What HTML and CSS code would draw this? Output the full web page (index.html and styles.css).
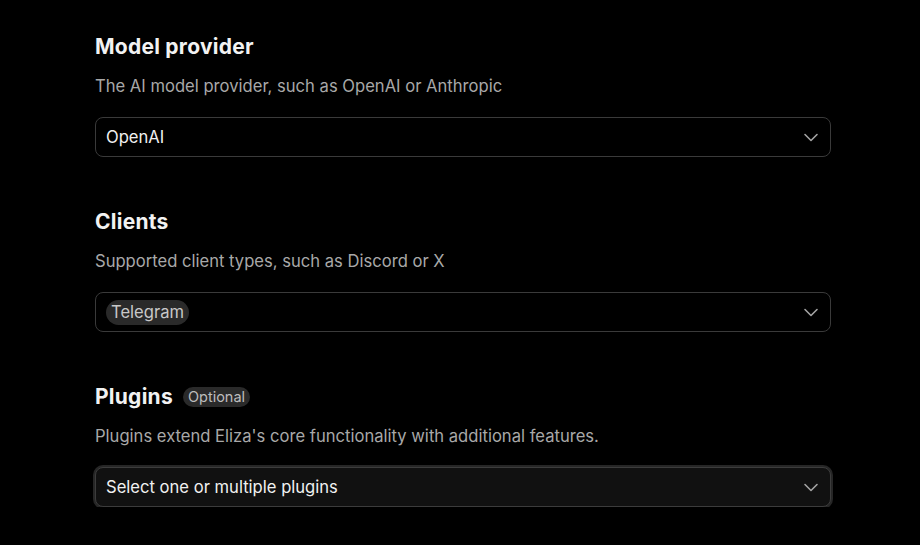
FILE: index.html
```html
<!DOCTYPE html>
<html>
<head>
<meta charset="utf-8">
<link rel="stylesheet" href="styles.css">
</head>
<body>
<main class="form">
  <section class="field">
    <h2 class="title">Model provider</h2>
    <p class="desc">The AI model provider, such as OpenAI or Anthropic</p>
    <div class="select">
      <span class="value">OpenAI</span>
      <svg class="chev" width="16" height="16" viewBox="0 0 16 16"><path d="M2 5.5l6 6 6-6" fill="none" stroke="#a3a3a3" stroke-width="1.6" stroke-linecap="round" stroke-linejoin="round"/></svg>
    </div>
  </section>
  <section class="field">
    <h2 class="title">Clients</h2>
    <p class="desc">Supported client types, such as Discord or X</p>
    <div class="select">
      <span class="chip">Telegram</span>
      <svg class="chev" width="16" height="16" viewBox="0 0 16 16"><path d="M2 5.5l6 6 6-6" fill="none" stroke="#a3a3a3" stroke-width="1.6" stroke-linecap="round" stroke-linejoin="round"/></svg>
    </div>
  </section>
  <section class="field">
    <h2 class="title">Plugins <span class="badge">Optional</span></h2>
    <p class="desc">Plugins extend Eliza's core functionality with additional features.</p>
    <div class="select focused">
      <span class="value">Select one or multiple plugins</span>
      <svg class="chev" width="16" height="16" viewBox="0 0 16 16"><path d="M2 5.5l6 6 6-6" fill="none" stroke="#a3a3a3" stroke-width="1.6" stroke-linecap="round" stroke-linejoin="round"/></svg>
    </div>
  </section>
</main>
</body>
</html>
```
FILE: styles.css
```css
html, body {
  margin: 0;
  padding: 0;
  background: #000;
}
body {
  font-family: Inter, "Noto Sans", sans-serif;
  color: #ededed;
}
.form {
  width: 736px;
  padding: 33px 0 0 95px;
  display: flex;
  flex-direction: column;
  gap: 51px;
}
.field {
  display: flex;
  flex-direction: column;
}
.title {
  margin: 0;
  font-size: 21px;
  line-height: 28px;
  font-weight: 700;
  color: #f2f2f2;
  display: flex;
  align-items: center;
  gap: 10px;
  letter-spacing: 0.25px;
}
.badge {
  font-size: 14.5px;
  font-weight: 400;
  line-height: 20px;
  padding: 0 5px;
  border-radius: 10px;
  background: #2a2a2a;
  color: #bdbdbd;
  letter-spacing: 0;
}
.desc {
  margin: 13px 0 0;
  font-size: 16.6px;
  line-height: 24px;
  color: #a8a8a8;
}
.select {
  margin-top: 19px;
  height: 40px;
  box-sizing: border-box;
  border: 1px solid #3a3a3a;
  border-radius: 8px;
  display: flex;
  align-items: center;
  justify-content: space-between;
  padding: 0 11px 0 10px;
  background: #000;
}
.select.focused {
  background: #111;
  border-color: #3c3c3c;
  box-shadow: 0 0 0 2px #262626;
}
.value {
  font-size: 16.6px;
  color: #f0f0f0;
}
.chip {
  font-size: 16.6px;
  line-height: 25px;
  color: #c8c8c8;
  background: #2a2a2a;
  border-radius: 13px;
  padding: 0 5px;
}
.chev {
  display: block;
}
```
